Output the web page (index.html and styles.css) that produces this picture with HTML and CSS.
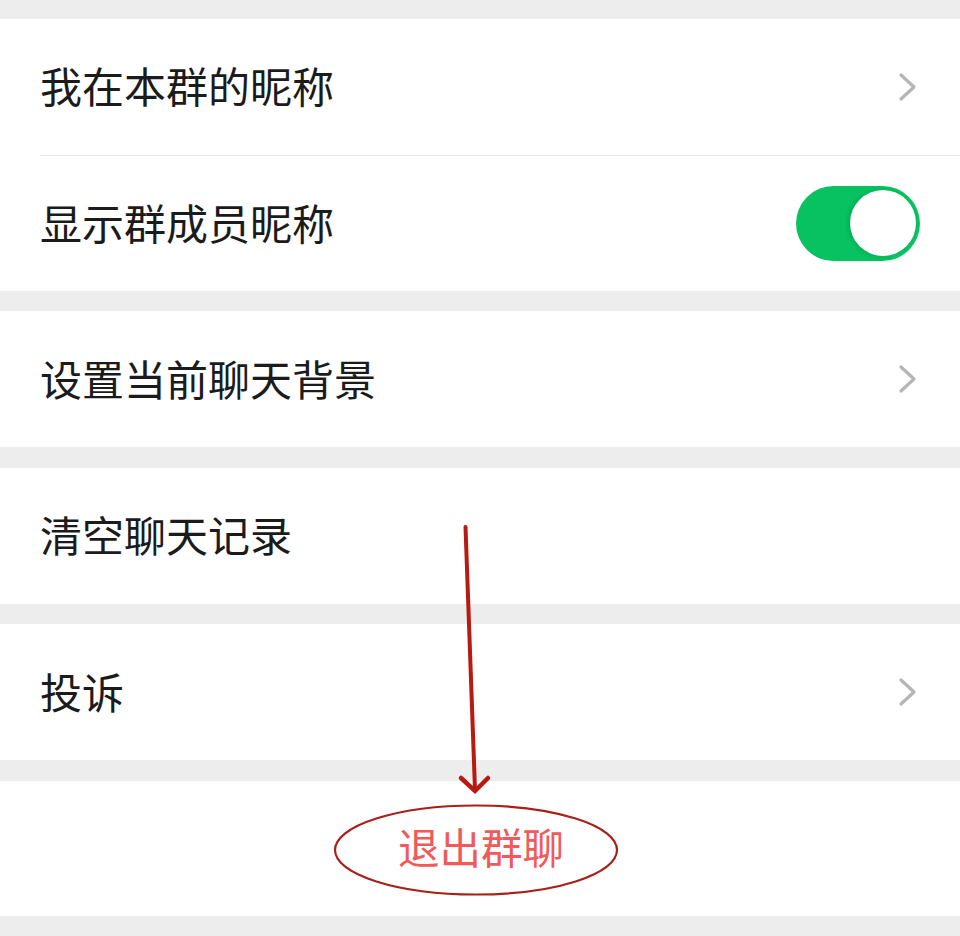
FILE: index.html
```
<!DOCTYPE html>
<html lang="zh-CN">
<head>
<meta charset="utf-8">
<title>群聊设置</title>
<link rel="stylesheet" href="styles.css">
</head>
<body>
<div class="page">
  <section class="group">
    <div class="cell">
      <div class="cell-body">
        <span class="label">我在本群的昵称</span>
        <svg class="chevron" width="19" height="30" viewBox="0 0 19 30"><path d="M3 3 L16 15 L3 27" fill="none" stroke="#b5b5b5" stroke-width="3.2" stroke-linecap="round" stroke-linejoin="round"/></svg>
      </div>
    </div>
    <div class="cell">
      <div class="cell-body divided toggle-body">
        <span class="label">显示群成员昵称</span>
        <span class="switch"><span class="knob"></span></span>
      </div>
    </div>
  </section>
  <section class="group">
    <div class="cell">
      <div class="cell-body">
        <span class="label">设置当前聊天背景</span>
        <svg class="chevron" width="19" height="30" viewBox="0 0 19 30"><path d="M3 3 L16 15 L3 27" fill="none" stroke="#b5b5b5" stroke-width="3.2" stroke-linecap="round" stroke-linejoin="round"/></svg>
      </div>
    </div>
  </section>
  <section class="group">
    <div class="cell">
      <div class="cell-body">
        <span class="label">清空聊天记录</span>
      </div>
    </div>
  </section>
  <section class="group">
    <div class="cell">
      <div class="cell-body">
        <span class="label">投诉</span>
        <svg class="chevron" width="19" height="30" viewBox="0 0 19 30"><path d="M3 3 L16 15 L3 27" fill="none" stroke="#b5b5b5" stroke-width="3.2" stroke-linecap="round" stroke-linejoin="round"/></svg>
      </div>
    </div>
  </section>
  <section class="group">
    <div class="cell center">
      <span class="danger">退出群聊</span>
    </div>
  </section>
  <svg class="annot" width="960" height="936" viewBox="0 0 960 936">
    <path d="M465.5 527 L475 790" fill="none" stroke="#b81a10" stroke-width="4" stroke-linecap="round"/>
    <path d="M461 778 L475 791 L488 778" fill="none" stroke="#b81a10" stroke-width="4.5" stroke-linecap="round" stroke-linejoin="miter"/>
    <ellipse cx="476" cy="850" rx="141" ry="44.5" fill="none" stroke="#a8201a" stroke-width="2.2"/>
  </svg>
</div>
</body>
</html>
```
FILE: styles.css
```
html, body {
  margin: 0;
  padding: 0;
}
body {
  background: #ededed;
  font-family: "Noto Sans CJK SC", "Noto Sans", sans-serif;
  color: #1b1b1b;
}
.page {
  position: relative;
  width: 960px;
  height: 936px;
  padding-top: 18.5px;
  box-sizing: border-box;
  overflow: hidden;
}
.group {
  background: #ffffff;
  margin-bottom: 20.5px;
}
.cell {
  padding-left: 40px;
}
.cell-body {
  height: 136px;
  display: flex;
  align-items: center;
  justify-content: space-between;
  padding-right: 43px;
  box-sizing: border-box;
}
.cell-body.divided {
  border-top: 1px solid #e6e6e6;
}
.toggle-body {
  padding-right: 40px;
}
.label {
  font-size: 42px;
  line-height: 1;
  margin-top: -3px;
}
.chevron {
  display: block;
}
.switch {
  width: 124px;
  height: 75px;
  border-radius: 38px;
  background: #08c160;
  display: flex;
  align-items: center;
  justify-content: flex-end;
  padding-right: 4px;
  box-sizing: border-box;
}
.knob {
  width: 66px;
  height: 66px;
  border-radius: 50%;
  background: #ffffff;
  box-shadow: -2px 0 4px rgba(0, 0, 0, 0.12);
}
.cell.center {
  padding-left: 0;
  height: 135px;
  display: flex;
  align-items: center;
  justify-content: center;
}
.danger {
  font-size: 41.5px;
  line-height: 1;
  color: #f05a5a;
  margin-left: 2px;
  margin-top: -3px;
}
.annot {
  position: absolute;
  left: 0;
  top: 0;
  pointer-events: none;
}
```
